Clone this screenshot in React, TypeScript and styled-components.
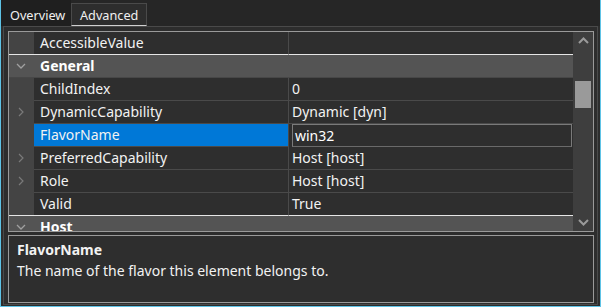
import React from "react";
import styled, { createGlobalStyle } from "styled-components";

const Global = createGlobalStyle`
  html, body { margin: 0; padding: 0; background: #2d2d2d; }
  body { font-family: "Noto Sans", "Open Sans", sans-serif; font-size: 14px; }
`;

const Window = styled.div`
  width: 599px;
  height: 306px;
  border: 1px solid #5ec3e6;
  border-top: none;
  background: #2d2d2d;
  display: flex;
  flex-direction: column;
  overflow: hidden;
`;

const TabStrip = styled.div`
  height: 26px;
  display: flex;
  align-items: stretch;
  background: #262626;
  font-size: 12.7px;
`;

const Tab = styled.div<{ $active?: boolean }>`
  display: flex;
  align-items: center;
  color: #f0f0f0;
  box-sizing: border-box;
  ${(p) =>
    p.$active
      ? `background:#1f1f1f; width:70px; padding-left:9px; padding-top:3px;`
      : `background:#2d2d2d; width:76px; margin-top:3px; padding-left:8px; padding-top:1px;
         border:1px solid #4a4a4a; border-bottom:1px solid #d0d0d0;`}
`;

const TabBody = styled.div`
  flex: 1;
  margin: 0 2px 1px 2px;
  border: 1px solid #4a4a4a;
  padding: 4px 3px 1px 4px;
  display: flex;
  flex-direction: column;
  gap: 3px;
`;

const Grid = styled.div`
  height: 201px;
  box-sizing: border-box;
  border: 1px solid #9a9a9a;
  display: flex;
  overflow: hidden;
`;

const Rows = styled.div`
  flex: 1;
  display: flex;
  flex-direction: column;
  overflow: hidden;
  background: #2e2e2e;
`;

const Row = styled.div`
  display: flex;
  flex: 0 0 auto;
  height: 23px;
`;

const Gutter = styled.div<{ $line: string }>`
  width: 25px;
  flex: 0 0 25px;
  box-sizing: border-box;
  background: #444444;
  border-bottom: 1px solid ${(p) => p.$line};
  display: flex;
  align-items: center;
  padding-left: 9px;
`;

const NameCell = styled.div<{ $line: string; $selected?: boolean }>`
  width: 255px;
  flex: 0 0 255px;
  box-sizing: border-box;
  padding-left: 6px;
  line-height: 22px;
  color: #f2f2f2;
  background: ${(p) => (p.$selected ? "#0078d7" : "#2e2e2e")};
  border-bottom: 1px solid ${(p) => p.$line};
  border-right: 1px solid #4a4a4a;
  white-space: nowrap;
`;

const ValueCell = styled.div<{ $line: string }>`
  flex: 1;
  box-sizing: border-box;
  padding-left: 3px;
  line-height: 22px;
  color: #f2f2f2;
  border-bottom: 1px solid ${(p) => p.$line};
  white-space: nowrap;
`;

const EditCell = styled.div`
  flex: 1;
  box-sizing: border-box;
  padding: 0 1px 0 3px;
  display: flex;
`;

const Editor = styled.div`
  flex: 1;
  height: 23px;
  box-sizing: border-box;
  border: 1px solid #7a7a7a;
  border-bottom-color: #6a6a6a;
  padding-left: 2px;
  line-height: 21px;
  color: #ffffff;
  background: #2e2e2e;
`;

const CategoryRow = styled.div<{ $line: string }>`
  display: flex;
  flex: 0 0 auto;
  height: 23px;
  box-sizing: border-box;
  background: #545454;
  border-bottom: 1px solid ${(p) => p.$line};
  align-items: center;
`;

const CatIcon = styled.div`
  width: 25px;
  flex: 0 0 25px;
  display: flex;
  padding-left: 7px;
  box-sizing: border-box;
  align-items: center;
`;

const CatLabel = styled.div`
  padding-left: 6px;
  font-weight: 700;
  color: #ffffff;
  line-height: 22px;
`;

const ScrollBar = styled.div`
  width: 20px;
  flex: 0 0 20px;
  background: #3e3e3e;
  display: flex;
  flex-direction: column;
`;

const ScrollButton = styled.div`
  height: 17px;
  display: flex;
  align-items: center;
  justify-content: center;
`;

const Track = styled.div`
  flex: 1;
  padding: 32px 2px 0 2px;
`;

const Thumb = styled.div`
  height: 27px;
  background: #9a9a9a;
`;

const Desc = styled.div`
  flex: 1;
  box-sizing: border-box;
  border: 1px solid #9a9a9a;
  background: #2e2e2e;
  padding: 4px 8px 0 8px;
  color: #f2f2f2;
`;

const DescTitle = styled.div`
  font-weight: 700;
  line-height: 20px;
`;

const DescText = styled.div`
  line-height: 20px;
  margin-top: 1px;
`;

const ChevronRight = () => (
  <svg width="6" height="10" viewBox="0 0 6 10">
    <path d="M1 1 L5 5 L1 9" fill="none" stroke="#7a7a7a" strokeWidth="1.2" />
  </svg>
);

const ChevronDown = () => (
  <svg width="10" height="6" viewBox="0 0 10 6">
    <path d="M1 1 L5 5 L9 1" fill="none" stroke="#a0a0a0" strokeWidth="1.3" />
  </svg>
);

const ArrowUp = () => (
  <svg width="11" height="7" viewBox="0 0 11 7">
    <path d="M1 6 L5.5 1.5 L10 6" fill="none" stroke="#9a9a9a" strokeWidth="2" />
  </svg>
);

const ArrowDown = () => (
  <svg width="11" height="7" viewBox="0 0 11 7">
    <path d="M1 1 L5.5 5.5 L10 1" fill="none" stroke="#9a9a9a" strokeWidth="2" />
  </svg>
);

type Item =
  | { kind: "cat"; name: string }
  | { kind: "prop"; name: string; value: string; expandable?: boolean; selected?: boolean };

const items: Item[] = [
  { kind: "prop", name: "AccessibleValue", value: "" },
  { kind: "cat", name: "General" },
  { kind: "prop", name: "ChildIndex", value: "0" },
  { kind: "prop", name: "DynamicCapability", value: "Dynamic [dyn]", expandable: true },
  { kind: "prop", name: "FlavorName", value: "win32", selected: true },
  { kind: "prop", name: "PreferredCapability", value: "Host [host]", expandable: true },
  { kind: "prop", name: "Role", value: "Host [host]", expandable: true },
  { kind: "prop", name: "Valid", value: "True" },
  { kind: "cat", name: "Host" },
];

export default function App() {
  return (
    <>
      <Global />
      <Window>
        <TabStrip>
          <Tab $active>Overview</Tab>
          <Tab>Advanced</Tab>
        </TabStrip>
        <TabBody>
          <Grid>
            <Rows>
              {items.map((it, i) => {
                const next = items[i + 1];
                const beforeCat = next && next.kind === "cat";
                if (it.kind === "cat") {
                  return (
                    <CategoryRow key={i} $line="#474747">
                      <CatIcon>
                        <ChevronDown />
                      </CatIcon>
                      <CatLabel>{it.name}</CatLabel>
                    </CategoryRow>
                  );
                }
                const line = beforeCat ? "#e6e6e6" : "#4a4a4a";
                return (
                  <Row key={i}>
                    <Gutter $line={beforeCat ? "#e6e6e6" : "#444444"}>
                      {it.expandable && <ChevronRight />}
                    </Gutter>
                    <NameCell $line={line} $selected={it.selected}>
                      {it.name}
                    </NameCell>
                    {it.selected ? (
                      <EditCell>
                        <Editor>{it.value}</Editor>
                      </EditCell>
                    ) : (
                      <ValueCell $line={line}>{it.value}</ValueCell>
                    )}
                  </Row>
                );
              })}
            </Rows>
            <ScrollBar>
              <ScrollButton>
                <ArrowUp />
              </ScrollButton>
              <Track>
                <Thumb />
              </Track>
              <ScrollButton>
                <ArrowDown />
              </ScrollButton>
            </ScrollBar>
          </Grid>
          <Desc>
            <DescTitle>FlavorName</DescTitle>
            <DescText>The name of the flavor this element belongs to.</DescText>
          </Desc>
        </TabBody>
      </Window>
    </>
  );
}
